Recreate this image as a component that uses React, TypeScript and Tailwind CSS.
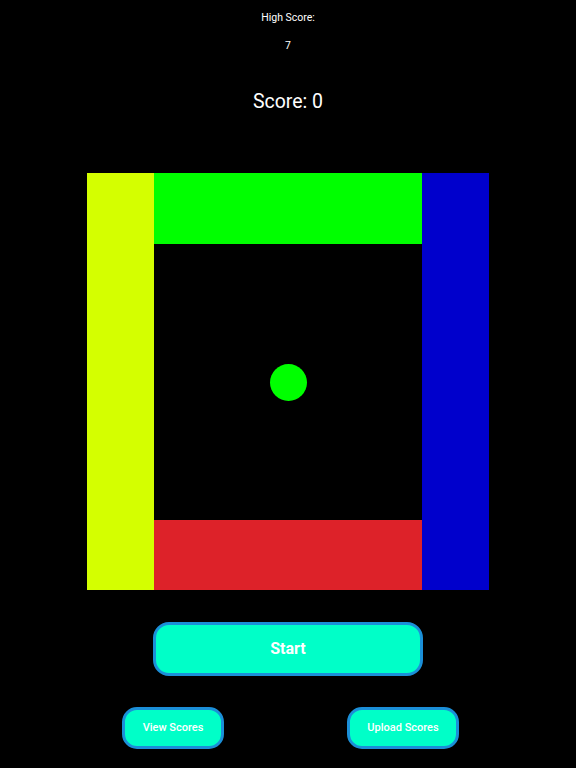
import React from "react";

export default function App() {
  return (
    <div
      className="w-[576px] h-[768px] bg-black text-white flex flex-col items-center overflow-hidden"
      style={{ fontFamily: "Roboto, 'Liberation Sans', sans-serif" }}
    >
      <div className="shrink-0 mt-[11px] h-[14px] leading-[14px] text-[10.5px]">High Score:</div>
      <div className="shrink-0 mt-[14px] h-[14px] leading-[14px] text-[10.5px]">7</div>
      <div className="shrink-0 mt-[36px] h-[26px] leading-[26px] text-[19.5px]">Score: 0</div>
      <div className="shrink-0 mt-[58px] w-[402px] h-[417px] flex">
        <div className="w-[67px] h-full bg-[#d4ff00]" />
        <div className="w-[268px] h-full flex flex-col">
          <div className="shrink-0 h-[71px] bg-[#00ff00]" />
          <div className="flex-1 flex items-center justify-center">
            <div className="w-[37px] h-[37px] rounded-full bg-[#00ff00]" />
          </div>
          <div className="shrink-0 h-[70px] bg-[#dd2229]" />
        </div>
        <div className="w-[67px] h-full bg-[#0000cc]" />
      </div>
      <button className="shrink-0 mt-[32px] w-[270px] h-[54px] rounded-[16px] bg-[#00ffc8] border-[3px] border-[#1b8fd8] text-white font-bold text-[16px]">
        Start
      </button>
      <div className="shrink-0 mt-[31px] w-full flex">
        <button className="ml-[122px] w-[102px] h-[42px] rounded-[15px] bg-[#00ffc8] border-[3px] border-[#1b8fd8] text-white font-medium text-[11px]">
          View Scores
        </button>
        <button className="ml-[123px] w-[112px] h-[42px] rounded-[15px] bg-[#00ffc8] border-[3px] border-[#1b8fd8] text-white font-medium text-[11px]">
          Upload Scores
        </button>
      </div>
    </div>
  );
}
